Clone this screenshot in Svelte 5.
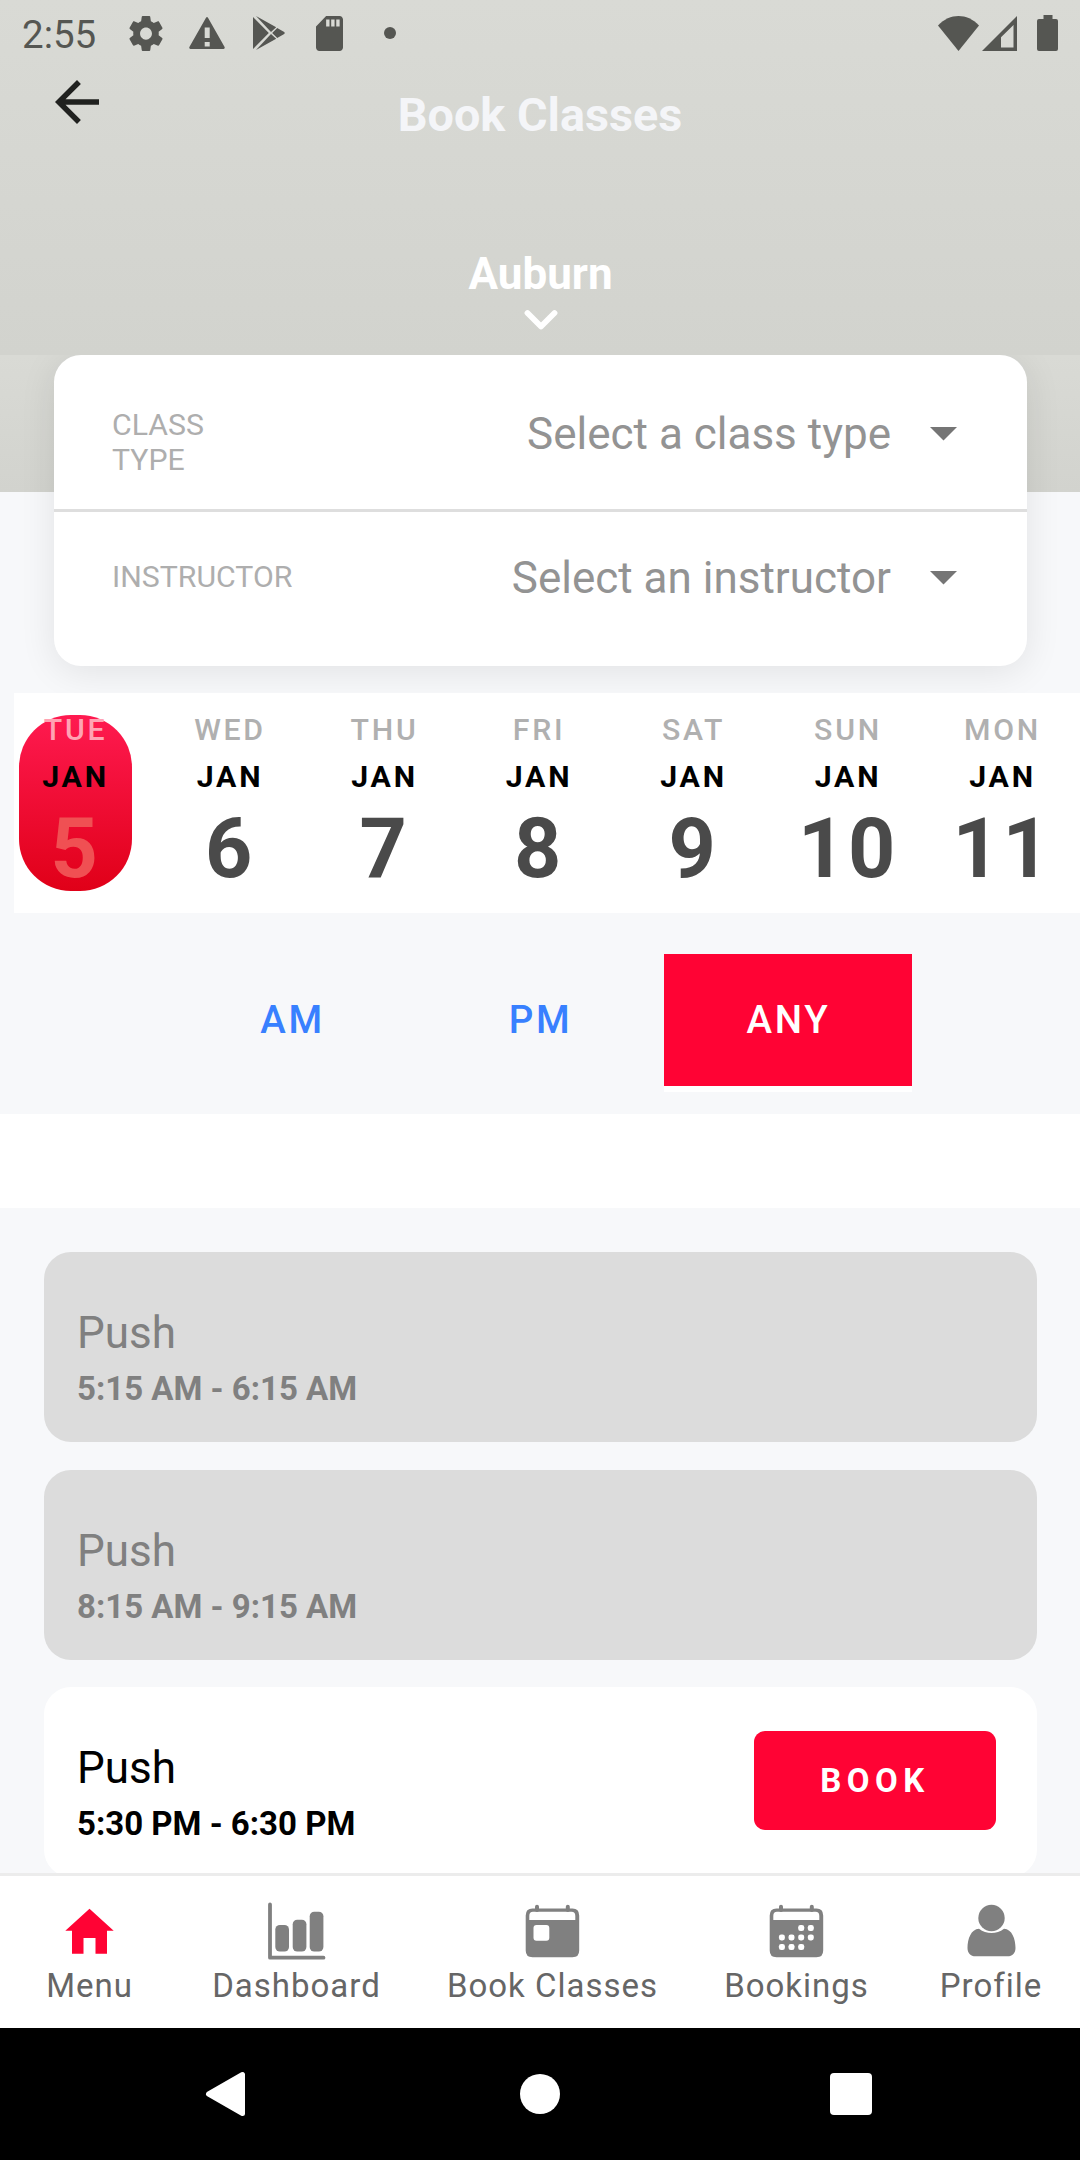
<script lang="ts">
  interface Filter {
    label: string;
    placeholder: string;
  }

  interface GymClass {
    name: string;
    time: string;
    bookable: boolean;
  }

  const filters: Filter[] = [
    { label: 'CLASS\nTYPE', placeholder: 'Select a class type' },
    { label: 'INSTRUCTOR', placeholder: 'Select an instructor' },
  ];

  const days = [
    { name: 'TUE', month: 'JAN', date: 5 },
    { name: 'WED', month: 'JAN', date: 6 },
    { name: 'THU', month: 'JAN', date: 7 },
    { name: 'FRI', month: 'JAN', date: 8 },
    { name: 'SAT', month: 'JAN', date: 9 },
    { name: 'SUN', month: 'JAN', date: 10 },
    { name: 'MON', month: 'JAN', date: 11 },
  ];

  const periods = ['AM', 'PM', 'ANY'];

  const classes: GymClass[] = [
    { name: 'Push', time: '5:15 AM - 6:15 AM', bookable: false },
    { name: 'Push', time: '8:15 AM - 9:15 AM', bookable: false },
    { name: 'Push', time: '5:30 PM - 6:30 PM', bookable: true },
  ];

  const tabs = [
    { id: 'menu', label: 'Menu' },
    { id: 'dashboard', label: 'Dashboard' },
    { id: 'book', label: 'Book Classes' },
    { id: 'bookings', label: 'Bookings' },
    { id: 'profile', label: 'Profile' },
  ];

  const bookingDots = [
    [34.2, 27], [43.8, 27],
    [14.9, 36.4], [24.5, 36.4], [34.2, 36.4], [43.8, 36.4],
    [14.9, 46], [24.5, 46], [34.2, 46],
  ];

  let selectedDate = $state(5);
  let period = $state('ANY');
</script>

<div class="screen">
  <header class="header">
    <div class="status-bar">
      <span class="clock">2:55</span>
      <svg class="gear" viewBox="2 2 20 20" width="34" height="35" preserveAspectRatio="none">
        <path d="M19.43 12.98c.04-.32.07-.64.07-.98s-.03-.66-.07-.98l2.11-1.65c.19-.15.24-.42.12-.64l-2-3.46c-.12-.22-.39-.3-.61-.22l-2.49 1c-.52-.4-1.08-.73-1.69-.98l-.38-2.65C14.46 2.18 14.25 2 14 2h-4c-.25 0-.46.18-.49.42l-.38 2.65c-.61.25-1.17.59-1.69.98l-2.49-1c-.23-.09-.49 0-.61.22l-2 3.46c-.13.22-.07.49.12.64l2.11 1.65c-.04.32-.07.65-.07.98s.03.66.07.98l-2.11 1.65c-.19.15-.24.42-.12.64l2 3.46c.12.22.39.3.61.22l2.49-1c.52.4 1.08.73 1.69.98l.38 2.65c.03.24.24.42.49.42h4c.25 0 .46-.18.49-.42l.38-2.65c.61-.25 1.17-.59 1.69-.98l2.49 1c.23.09.49 0 .61-.22l2-3.46c.12-.22.07-.49-.12-.64l-2.11-1.65zM12 15.5c-1.93 0-3.5-1.57-3.5-3.5s1.57-3.5 3.5-3.5 3.5 1.57 3.5 3.5-1.57 3.5-3.5 3.5z" />
      </svg>
      <svg class="warning" viewBox="0 0 36 32" width="36" height="32">
        <path d="M17 .8q1-1.4 2 0L35.6 30q.6 1.6-1 2H1.4q-1.6-.4-1-2zM15.7 10.5v10.5h5V10.5zm0 14.5v4.500h5V25z" fill-rule="evenodd" />
      </svg>
      <svg class="play" viewBox="0 0 32 34" width="32" height="34">
        <path d="M0 1L15.8 17 0 33zM3 0L23.2 11.200 18 16.100zM24.200 11.900L31.200 16q1 1 0 2L24.200 22.100 19.200 17zM3 34L18 17.900 23.200 22.800z" />
      </svg>
      <svg class="sd" viewBox="4 2 16 20" width="27" height="35" preserveAspectRatio="none">
        <path d="M18 2h-8L4 8v12c0 1.100.9 2 2 2h12c1.100 0 2-.9 2-2V4c0-1.100-.9-2-2-2zm-6 6h-2V4h2v4zm3 0h-2V4h2v4zm3 0h-2V4h2v4z" />
      </svg>
      <span class="dot"></span>
      <svg class="wifi" viewBox="0 0 41 35" width="41" height="35">
        <path d="M0 9.500C12-3.100 29-3.100 41 9.500L20.500 35z" />
      </svg>
      <svg class="signal" viewBox="0 0 35 35" width="35" height="35">
        <path d="M35 0v35H0zM31.500 9L19 21.200V31.500h12.500z" fill-rule="evenodd" />
      </svg>
      <svg class="battery" viewBox="0 0 21 36" width="21" height="36">
        <path d="M6.500 0h9v4H19q2 0 2 2v28q0 2-2 2H2q-2 0-2-2V6q0-2 2-2h4.500z" />
      </svg>
    </div>
    <div class="toolbar">
      <button class="back" aria-label="Back">
        <svg viewBox="0 0 24 24" width="66" height="66">
          <path d="M20 11H7.830l5.590-5.590L12 4l-8 8 8 8 1.410-1.410L7.830 13H20v-2z" />
        </svg>
      </button>
      <h1>Book Classes</h1>
    </div>
    <button class="location">
      <span>Auburn</span>
      <svg viewBox="0 0 40 24" width="40" height="24" fill="none" stroke="#fff" stroke-width="5.800" stroke-linecap="round" stroke-linejoin="round">
        <path d="M6.500 5L20 18.500 33.500 5" />
      </svg>
    </button>
  </header>

  <main class="content">
    <section class="filters">
      {#each filters as filter}
        <div class="filter">
          <span class="filter-label">{filter.label}</span>
          <span class="filter-value">{filter.placeholder}</span>
          <svg class="caret" viewBox="0 0 27 13.500" width="27" height="13.500">
            <path d="M0 0h27L13.500 13.500z" />
          </svg>
        </div>
      {/each}
    </section>

    <section class="calendar">
      {#each days as day}
        <button class="day" class:selected={day.date === selectedDate} onclick={() => (selectedDate = day.date)}>
          <span class="day-name">{day.name}</span>
          <span class="day-month">{day.month}</span>
          <span class="day-date">{day.date}</span>
        </button>
      {/each}
    </section>

    <section class="periods">
      {#each periods as item}
        <button class="period" class:active={item === period} onclick={() => (period = item)}>{item}</button>
      {/each}
    </section>

    <div class="spacer"></div>

    <section class="classes">
      {#each classes as item}
        <article class="class-card" class:past={!item.bookable}>
          <div>
            <p class="class-name">{item.name}</p>
            <p class="class-time">{item.time}</p>
          </div>
          {#if item.bookable}
            <button class="book-btn">BOOK</button>
          {/if}
        </article>
      {/each}
    </section>
  </main>

  <nav class="tab-bar">
    {#each tabs as tab}
      <button class="tab">
        <svg class="tab-icon" class:home={tab.id === 'menu'} viewBox="0 0 60 60" width="60" height="60">
          {#if tab.id === 'menu'}
            <path d="M29.500 7.700L53.700 29.700H47V52.700H35.500V37H23.500V52.700H12V29.700H5.300z" />
          {:else if tab.id === 'dashboard'}
            <path d="M3 3.500V56.700H56.500" fill="none" stroke="currentColor" stroke-width="3.800" stroke-linecap="round" stroke-linejoin="round" />
            <rect x="8.300" y="24" width="13.700" height="26.500" rx="4.500" />
            <rect x="25.700" y="18.700" width="13.700" height="31.800" rx="4.500" />
            <rect x="42.700" y="10.700" width="13.700" height="39.800" rx="4.500" />
          {:else if tab.id === 'profile'}
            <circle cx="30.500" cy="17" r="13.200" />
            <path d="M18 27.700C25.500 33.500 35.500 33.500 43 27.700C51 28 54.500 38 54.500 47C54.500 52 51.500 55.300 46.500 55.300H14.500C9.500 55.300 6.500 52 6.500 47C6.500 38 10 28 18 27.700z" />
          {:else}
            <path d="M14 5.800V9M44.800 5.800V9" stroke="currentColor" stroke-width="4" stroke-linecap="round" />
            <path d="M9.500 7.500H49.500Q56.200 7.500 56.200 14.500V49.500Q56.200 56.300 49.500 56.300H9.500Q2.700 56.300 2.700 49.500V14.500Q2.700 7.500 9.500 7.500zM10 10.800Q6.300 10.800 6.300 15V19H52.300V15Q52.300 10.800 48.500 10.800z" fill-rule="evenodd" />
            {#if tab.id === 'book'}
              <rect class="cutout" x="10.500" y="24" width="15.800" height="15.700" rx="3" />
            {:else}
              {#each bookingDots as [x, y]}
                <rect class="cutout" x={x - 3} y={y - 3} width="6" height="6" rx="2.300" />
              {/each}
            {/if}
          {/if}
        </svg>
        <span class="tab-label">{tab.label}</span>
      </button>
    {/each}
  </nav>

  <div class="system-nav">
    <svg viewBox="0 0 40 46" width="40" height="46">
      <path d="M3.500 23L37.500 3.500V42.500z" stroke="#fff" stroke-width="5" stroke-linejoin="round" />
    </svg>
    <svg class="nav-home" viewBox="0 0 40 40" width="40" height="40">
      <circle cx="20" cy="20" r="20" />
    </svg>
    <svg viewBox="0 0 42 42" width="42" height="42">
      <rect width="42" height="42" rx="4" />
    </svg>
  </div>
</div>

<style>
  :global(body) {
    margin: 0;
  }

  .screen {
    width: 1080px;
    height: 2160px;
    display: flex;
    flex-direction: column;
    overflow: hidden;
    background: #f7f8fa;
    font-family: Roboto, sans-serif;
  }

  button {
    padding: 0;
    border: 0;
    background: none;
    color: inherit;
    font: inherit;
    letter-spacing: inherit;
  }

  svg {
    display: block;
    flex-shrink: 0;
  }

  .header {
    height: 355px;
    flex-shrink: 0;
    display: flex;
    flex-direction: column;
    background: linear-gradient(#d9dad5, #d2d3ce);
  }

  .status-bar {
    height: 66px;
    box-sizing: border-box;
    padding: 0 22px;
    display: flex;
    align-items: center;
    color: #555652;
    fill: #555652;
  }

  .clock {
    width: 107px;
    font-size: 38.5px;
    line-height: 46px;
    margin-top: 3px;
  }

  .gear {
    margin-right: 26px;
  }

  .warning {
    margin-right: 28px;
  }

  .play {
    margin-right: 31px;
  }

  .dot {
    width: 12px;
    height: 12px;
    margin-left: 41px;
    border-radius: 50%;
    background: #555652;
  }

  .wifi {
    margin-left: auto;
    margin-right: 3px;
  }

  .battery {
    margin-left: 20px;
  }

  .toolbar {
    height: 98px;
    display: grid;
    grid-template-columns: 1fr auto 1fr;
    align-items: center;
  }

  .back {
    align-self: start;
    justify-self: start;
    margin: 3px 0 0 44px;
    fill: #20211f;
  }

  h1 {
    margin: 0;
    font-size: 46.75px;
    line-height: 55px;
    font-weight: 700;
    color: #f4f5f8;
  }

  .location {
    margin-top: 84px;
    padding-left: 1px;
    display: flex;
    flex-direction: column;
    align-items: center;
    gap: 8px;
    font-size: 44px;
    line-height: 52px;
    font-weight: 700;
    color: #fff;
  }

  .content {
    flex: 1;
    min-height: 0;
    overflow: hidden;
    background: linear-gradient(#d9dad5, #d2d3ce) top / 100% 137px no-repeat;
  }

  .filters {
    height: 311px;
    margin: 0 53px 0 54px;
    border-radius: 27px;
    background: #fff;
    box-shadow: 0 6px 36px rgba(0, 0, 0, 0.09);
  }

  .filter {
    height: 154px;
    box-sizing: border-box;
    padding: 52px 70px 0 58px;
    display: flex;
    align-items: flex-start;
  }

  .filter + .filter {
    height: 157px;
    padding-top: 40px;
    border-top: 3px solid #dedede;
  }

  .filter-label {
    font-size: 30.25px;
    line-height: 35px;
    white-space: pre-line;
    color: #aeaeae;
  }

  .filter + .filter .filter-label {
    margin-top: 7px;
  }

  .filter-value {
    margin-top: 1px;
    margin-left: auto;
    font-size: 44px;
    line-height: 52px;
    color: #939393;
  }

  .filter + .filter .filter-value {
    margin-top: 0;
  }

  .caret {
    margin: 20px 0 0 39px;
    fill: #757575;
  }

  .filter + .filter .caret {
    margin-top: 19px;
  }

  .calendar {
    height: 220px;
    box-sizing: border-box;
    margin: 27px 0 0 14px;
    padding: 22px 0 0 5px;
    display: flex;
    gap: 41.5px;
    background: #fff;
  }

  .day {
    width: 113px;
    height: 176px;
    flex-shrink: 0;
    display: flex;
    flex-direction: column;
    align-items: center;
    border-radius: 52px;
    letter-spacing: 2.75px;
  }

  .day.selected {
    background: linear-gradient(#ff1a50, #e00018);
  }

  .day-name,
  .day-month {
    font-size: 30.25px;
    line-height: 35px;
  }

  .day-name {
    margin-top: -3px;
    font-weight: 500;
    color: #b0b0b0;
  }

  .day-month {
    margin-top: 12px;
    font-weight: 700;
    color: #000;
  }

  .day-date {
    margin-top: 6px;
    font-size: 82.5px;
    line-height: 97px;
    font-weight: 700;
    color: #4a4a4a;
  }

  .selected .day-name {
    color: #ffa3b3;
  }

  .selected .day-date {
    color: #f05053;
  }

  .periods {
    height: 201px;
    box-sizing: border-box;
    padding-top: 41px;
    display: flex;
    justify-content: center;
    align-items: flex-start;
  }

  .period {
    width: 248px;
    height: 138px;
    padding: 0 0 2px 1px;
    border-bottom: 6px solid transparent;
    font-size: 38.5px;
    font-weight: 500;
    letter-spacing: 2.75px;
    color: #3880ff;
  }

  .period.active {
    border-bottom-color: #fff;
    background: #ff0334;
    color: #fff;
  }

  .spacer {
    height: 94px;
    background: #fff;
  }

  .classes {
    padding: 44px 43px 0 44px;
    display: flex;
    flex-direction: column;
    gap: 27.5px;
  }

  .class-card {
    height: 190px;
    box-sizing: border-box;
    padding: 0 41px 0 33px;
    display: flex;
    align-items: flex-start;
    justify-content: space-between;
    border-radius: 27px;
    background: #fff;
    color: #000;
  }

  .class-card.past {
    background: #dcdcdc;
    color: #808080;
  }

  .class-card p {
    margin: 0;
  }

  .class-name {
    padding-top: 55px;
    font-size: 44px;
    line-height: 52px;
  }

  .class-card .class-time {
    margin-top: 10px;
    font-size: 33px;
    line-height: 39px;
    font-weight: 700;
  }

  .book-btn {
    width: 242px;
    height: 99px;
    margin-top: 44px;
    padding-bottom: 1px;
    border-radius: 11px;
    background: #ff0334;
    color: #fff;
    font-size: 33px;
    font-weight: 700;
    letter-spacing: 5.5px;
  }

  .tab-bar {
    height: 155px;
    box-sizing: border-box;
    flex-shrink: 0;
    display: grid;
    grid-template-columns: 179px 235px 277px 211px 178px;
    border-top: 3px solid #ececec;
    background: #fff;
  }

  .tab {
    padding-top: 25px;
    display: flex;
    flex-direction: column;
    align-items: center;
    gap: 5px;
    color: #808080;
  }

  .tab-icon {
    fill: currentColor;
  }

  .tab-icon.home {
    color: #ff0334;
  }

  .cutout {
    fill: #fff;
  }

  .tab-label {
    font-size: 33px;
    line-height: 39px;
    letter-spacing: 1px;
    white-space: nowrap;
    color: #666;
  }

  .system-nav {
    height: 132px;
    flex-shrink: 0;
    box-sizing: border-box;
    padding: 0 208px 0 205px;
    display: flex;
    align-items: center;
    justify-content: space-between;
    background: #000;
    fill: #fff;
  }

  .nav-home {
    margin-left: 5px;
  }
</style>
